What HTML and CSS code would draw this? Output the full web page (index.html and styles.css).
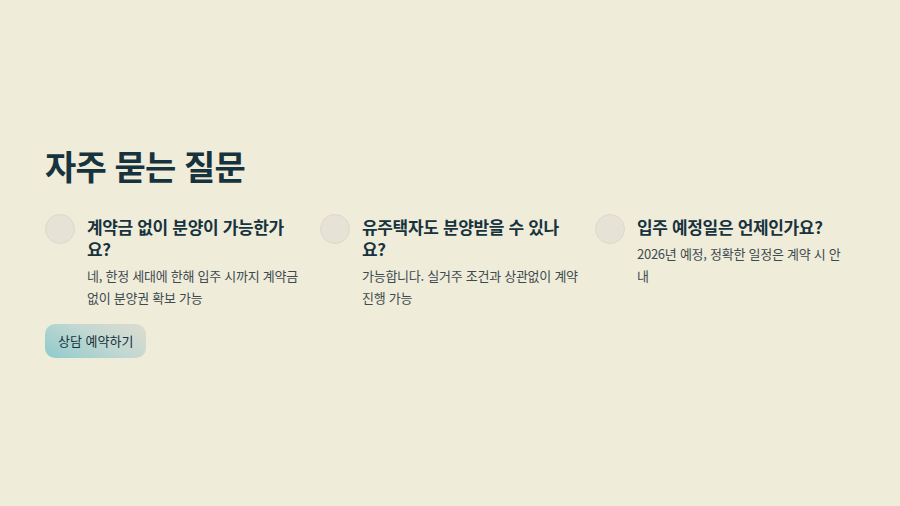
FILE: index.html
```html
<!DOCTYPE html>
<html lang="ko">
<head>
<meta charset="utf-8">
<link rel="stylesheet" href="styles.css">
</head>
<body>
<main class="page">
  <section class="faq">
    <h2 class="faq-title">자주 묻는 질문</h2>
    <div class="faq-grid">
      <div class="faq-item">
        <span class="dot"></span>
        <div class="faq-body">
          <h3 class="q">계약금 없이 분양이 가능한가요?</h3>
          <p class="a">네, 한정 세대에 한해 입주 시까지 계약금 없이 분양권 확보 가능</p>
        </div>
      </div>
      <div class="faq-item">
        <span class="dot"></span>
        <div class="faq-body">
          <h3 class="q">유주택자도 분양받을 수 있나요?</h3>
          <p class="a">가능합니다. 실거주 조건과 상관없이 계약 진행 가능</p>
        </div>
      </div>
      <div class="faq-item">
        <span class="dot"></span>
        <div class="faq-body">
          <h3 class="q">입주 예정일은 언제인가요?</h3>
          <p class="a">2026년 예정, 정확한 일정은 계약 시 안<br>내</p>
        </div>
      </div>
    </div>
    <a class="cta" href="#">상담 예약하기</a>
  </section>
</main>
</body>
</html>
```
FILE: styles.css
```css
* { box-sizing: border-box; }
html, body { margin: 0; padding: 0; }
body {
  background: #f0ecda;
  font-family: "Noto Sans CJK KR", "Noto Sans", sans-serif;
  color: #17333d;
}
.page {
  min-height: 506px;
  display: flex;
  align-items: center;
  padding: 0 45px 4px;
}
.faq { width: 810px; }
.faq-title {
  margin: 0 0 26px;
  font-size: 34px;
  font-weight: 700;
  line-height: 44px;
  letter-spacing: -0.025em;
}
.faq-grid {
  display: grid;
  grid-template-columns: repeat(3, 260px);
  column-gap: 15px;
  margin-bottom: 15px;
}
.faq-item {
  display: flex;
  gap: 12px;
  align-items: flex-start;
}
.dot {
  flex: none;
  width: 30px;
  height: 30px;
  border-radius: 50%;
  background: #e6e2d6;
  border: 1px solid #ddd8c9;
}
.faq-body { flex: 1; min-width: 0; }
.q {
  margin: 2px 0 5px;
  font-size: 17px;
  font-weight: 700;
  line-height: 22px;
  letter-spacing: -0.02em;
}
.a {
  margin: 0;
  font-size: 13px;
  line-height: 22px;
  letter-spacing: -0.02em;
  color: #3d4b4f;
}
.cta {
  display: inline-block;
  padding: 0 13px;
  height: 34px;
  line-height: 34px;
  border-radius: 10px;
  background: linear-gradient(30deg, #8ecacd 0%, #c3d8d2 55%, #dcdcd0 100%);
  color: #17333d;
  font-size: 13px;
  text-decoration: none;
}
```
